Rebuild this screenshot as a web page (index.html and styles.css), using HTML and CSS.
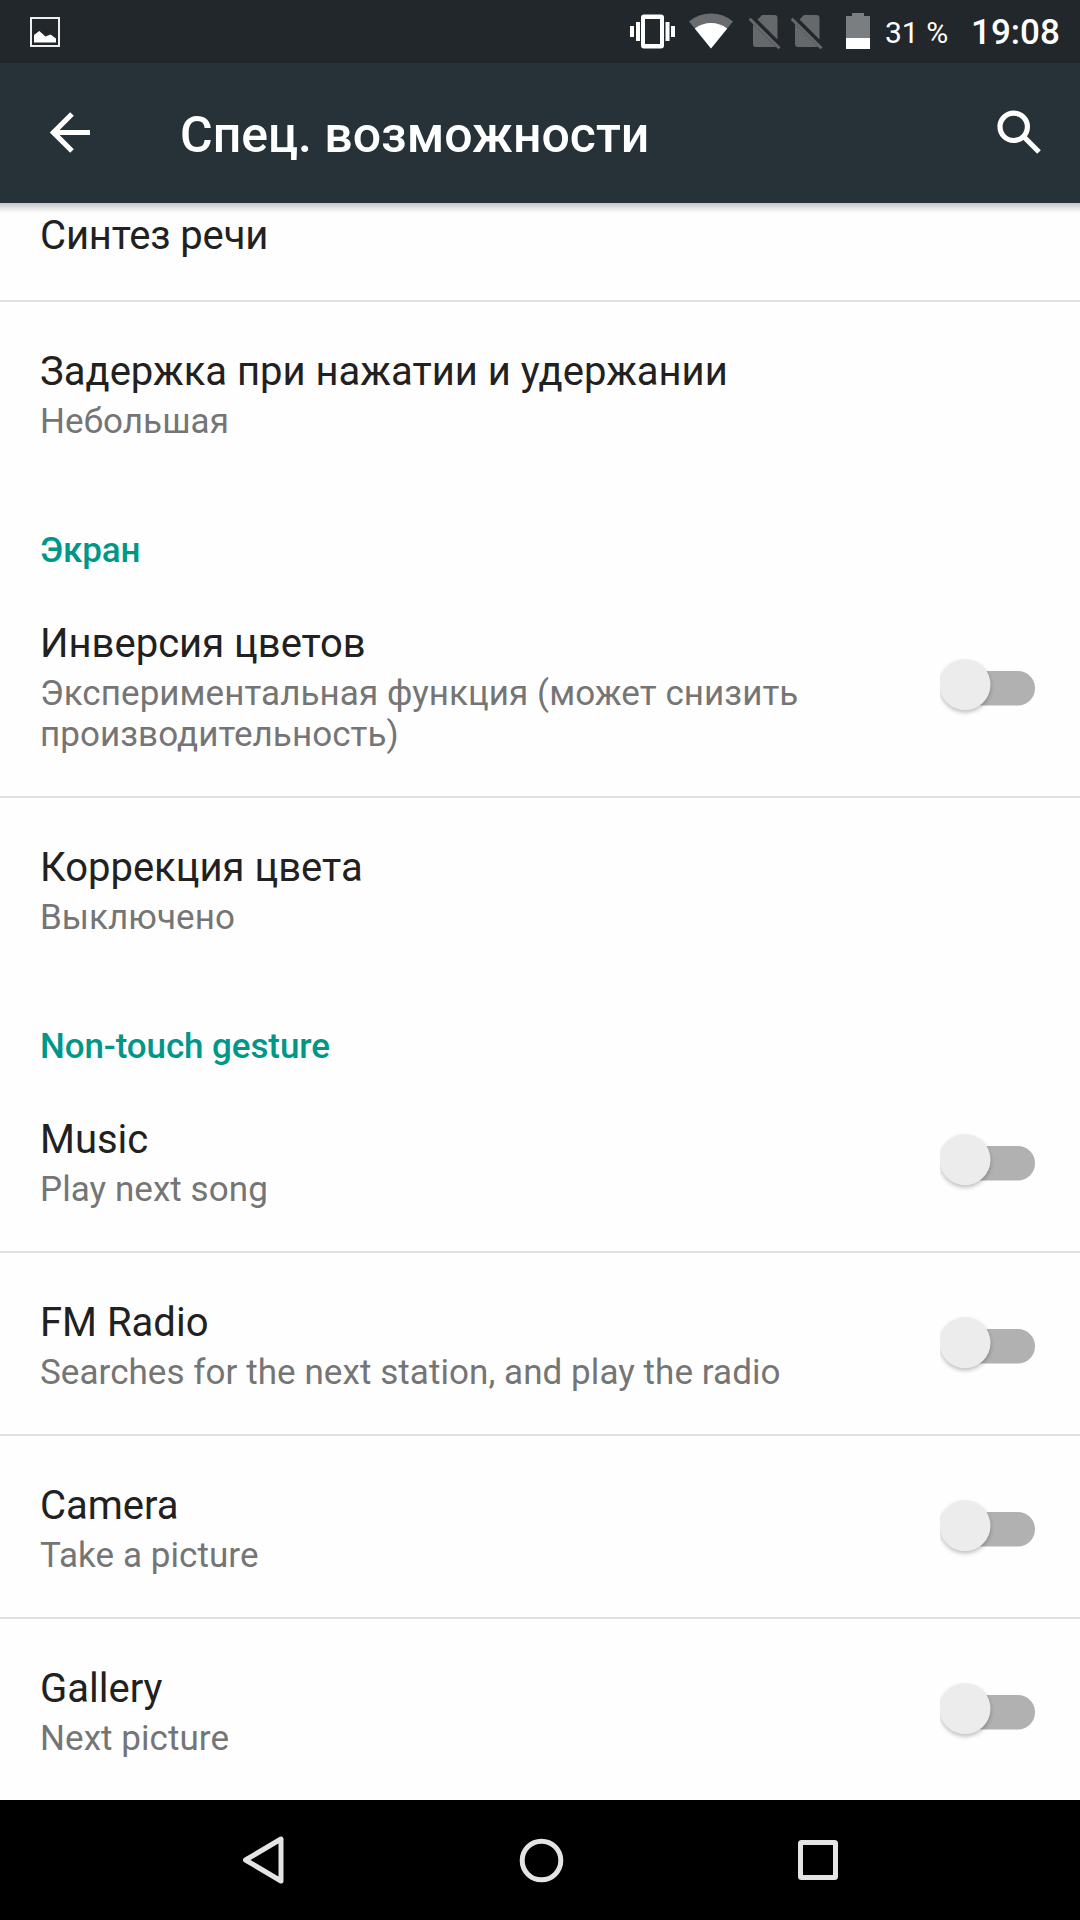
FILE: index.html
```html
<!DOCTYPE html>
<html lang="ru">
<head>
    <meta charset="UTF-8">
    <meta name="viewport" content="width=device-width, initial-scale=1.0">
    <title>Спец. возможности</title>
    <link rel="stylesheet" href="styles.css">
</head>
<body>
    <svg class="sprite" width="0" height="0">
        <symbol id="sim-off" viewBox="0 0 34 37">
            <path d="M5 11 L28.5 34.3 Q28 33.9 26 34 H8 Q5 34 5 31 Z M9.5 6.5 L14 2 H26.5 Q29.5 2 29.5 5 V26.5 Z"/>
            <path class="slash" d="M1.7 5.7 L31.5 35.2"/>
        </symbol>
        <symbol id="switch-off" viewBox="0 0 100 70">
            <rect class="track" x="3" y="21" width="92" height="34.5" rx="17.2"/>
            <circle class="thumb-shadow" cx="25" cy="37" r="25.5"/>
            <circle class="thumb" cx="25" cy="34.8" r="25.5"/>
        </symbol>
    </svg>

    <div class="status-bar">
        <svg class="icon-image" width="30" height="30" viewBox="0 0 30 30">
            <rect x="1" y="1" width="28" height="28"/>
            <path d="M4 25.5 V18 L9.3 14 L15.5 19.5 L20.5 17.5 L26 21.5 V25.5 Z"/>
        </svg>
        <svg class="icon-vibrate" width="46" height="37" viewBox="0 0 46 37">
            <path d="M0 13h4v11H0z M6 9h4v19H6z M35.500 9h4v19h-4z M41 13h4v11h-4z"/>
            <path fill-rule="evenodd" d="M14 1.500h17q3 0 3 3v28q0 3-3 3H14q-3 0-3-3v-28q0-3 3-3z M15 6v25h15V6z"/>
        </svg>
        <svg class="icon-wifi" width="44" height="37" viewBox="0 0 44 37">
            <path class="dim" d="M22 35.500 L0 8.500 Q9.500 .5 22 .5 T44 8.500 Z"/>
            <path d="M22 35.500 L5.800 15.500 Q13 10 22 10 T38.200 15.500 Z"/>
        </svg>
        <svg class="icon-sim" width="34" height="37"><use href="#sim-off"/></svg>
        <svg class="icon-sim" width="34" height="37"><use href="#sim-off"/></svg>
        <svg class="icon-battery" width="24" height="37" viewBox="0 0 24 37">
            <path class="dim" d="M0 3h6V0h12v3h6v22H0z"/>
            <path d="M0 25h24v11H0z"/>
        </svg>
        <span class="battery-text">31 %</span>
        <span class="clock">19:08</span>
    </div>

    <div class="app-bar">
        <svg class="icon-back" width="42" height="42" viewBox="0 0 42 42">
            <path d="M22 2 L3.500 20.500 L22 39 M3.500 20.500 H40"/>
        </svg>
        <h1>Спец. возможности</h1>
        <svg class="icon-search" width="46" height="46" viewBox="0 0 46 46">
            <circle cx="17.700" cy="16.800" r="13.700"/>
            <path d="M27.500 26.500 L43 42"/>
        </svg>
    </div>

    <div class="list">
        <div class="row first">
            <div class="title">Синтез речи</div>
        </div>
        <div class="row last">
            <div class="text">
                <div class="title">Задержка при нажатии и удержании</div>
                <div class="summary">Небольшая</div>
            </div>
        </div>

        <h2>Экран</h2>
        <div class="row">
            <div class="text">
                <div class="title">Инверсия цветов</div>
                <div class="summary">Экспериментальная функция (может снизить производительность)</div>
            </div>
            <svg class="switch" width="100" height="70"><use href="#switch-off"/></svg>
        </div>
        <div class="row last">
            <div class="text">
                <div class="title">Коррекция цвета</div>
                <div class="summary">Выключено</div>
            </div>
        </div>

        <h2>Non-touch gesture</h2>
        <div class="row">
            <div class="text">
                <div class="title">Music</div>
                <div class="summary">Play next song</div>
            </div>
            <svg class="switch" width="100" height="70"><use href="#switch-off"/></svg>
        </div>
        <div class="row">
            <div class="text">
                <div class="title">FM Radio</div>
                <div class="summary">Searches for the next station, and play the radio</div>
            </div>
            <svg class="switch" width="100" height="70"><use href="#switch-off"/></svg>
        </div>
        <div class="row">
            <div class="text">
                <div class="title">Camera</div>
                <div class="summary">Take a picture</div>
            </div>
            <svg class="switch" width="100" height="70"><use href="#switch-off"/></svg>
        </div>
        <div class="row last">
            <div class="text">
                <div class="title">Gallery</div>
                <div class="summary">Next picture</div>
            </div>
            <svg class="switch" width="100" height="70"><use href="#switch-off"/></svg>
        </div>
    </div>

    <div class="nav-bar">
        <svg width="50" height="50" viewBox="0 0 50 50">
            <path d="M42 4 V46 L6.500 25 Z"/>
        </svg>
        <svg width="50" height="50" viewBox="0 0 50 50">
            <circle cx="25.500" cy="25.500" r="19.300"/>
        </svg>
        <svg width="50" height="50" viewBox="0 0 50 50">
            <rect x="7.500" y="7.500" width="35" height="35" rx="1"/>
        </svg>
    </div>
</body>
</html>
```
FILE: styles.css
```css
* {
    box-sizing: border-box;
}

body {
    width: 1080px;
    height: 1920px;
    margin: 0;
    display: flex;
    flex-direction: column;
    overflow: hidden;
    background-color: #fefefe;
    font-family: Roboto, "Noto Sans", sans-serif;
    color: #212121;
}

svg {
    display: block;
    flex: none;
}

.sprite {
    position: absolute;
}

/* status bar */
.status-bar {
    display: flex;
    align-items: center;
    height: 63px;
    flex: none;
    padding-left: 30px;
    background-color: #22272b;
    color: #fff;
    fill: #fff;
    white-space: nowrap;
}

.icon-image rect {
    fill: none;
    stroke: #eee;
    stroke-width: 2;
}

.icon-vibrate {
    margin-left: 570px;
}

.icon-wifi {
    margin-left: 13px;
    margin-right: 7px;
}

.dim {
    fill: #696d70;
}

.icon-battery .dim {
    fill: #7b7e80;
}

.icon-sim {
    margin-left: 8px;
    fill: #65696c;
}

.slash {
    stroke: #65696c;
    stroke-width: 3;
}

.icon-battery {
    margin-left: 22px;
}

.battery-text {
    width: 86px;
    margin-left: 15px;
    font-size: 30px;
    line-height: 36px;
    padding-top: 2px;
}

.clock {
    font-size: 35px;
    font-weight: 500;
    line-height: 41px;
    padding-top: 2px;
}

/* app bar */
.app-bar {
    position: relative;
    display: flex;
    align-items: center;
    height: 140px;
    flex: none;
    padding: 0 38px 0 50px;
    background-color: #263238;
    color: #fff;
}

.app-bar::after {
    content: "";
    position: absolute;
    top: 140px;
    left: 0;
    right: 0;
    height: 10px;
    background: linear-gradient(#c6c6c6, #e0e0e0 45%, #fefefe);
}

.app-bar h1 {
    flex: 1;
    margin: 0 0 0 88px;
    padding-top: 3px;
    font-size: 50px;
    font-weight: 500;
    line-height: 58px;
}

.icon-back,
.icon-search {
    fill: none;
    stroke: #fff;
    stroke-width: 5.2;
}

/* settings list */
.list {
    flex: 1;
    overflow: hidden;
}

.row {
    display: flex;
    align-items: center;
    justify-content: space-between;
    padding: 46px 40px 41px;
    border-bottom: 2px solid #e0e0e0;
}

.row.first {
    padding-top: 9px;
    padding-bottom: 40px;
    letter-spacing: -0.15px;
}

.row.last {
    border-bottom: none;
}

.text {
    width: 800px;
}

.title {
    font-size: 40px;
    line-height: 48px;
}

.summary {
    margin-top: 5px;
    font-size: 35px;
    line-height: 41px;
    letter-spacing: 0.06px;
    color: #757575;
}

h2 {
    margin: 0;
    padding: 47px 40px 3px;
    font-size: 35px;
    font-weight: 500;
    line-height: 41px;
    letter-spacing: -0.1px;
    color: #009688;
}

.switch {
    margin: -13px 0 -7px;
}

.track {
    fill: #b1b1b1;
}

.thumb {
    fill: #ececec;
}

.thumb-shadow {
    fill: #000;
    opacity: .25;
    filter: blur(2px);
}

/* navigation bar */
.nav-bar {
    display: flex;
    align-items: center;
    justify-content: space-between;
    height: 120px;
    flex: none;
    padding: 0 237px 0 239px;
    background-color: #000;
}

.nav-bar svg {
    fill: none;
    stroke: #e4e4e4;
    stroke-width: 5;
    stroke-linejoin: round;
}
```
